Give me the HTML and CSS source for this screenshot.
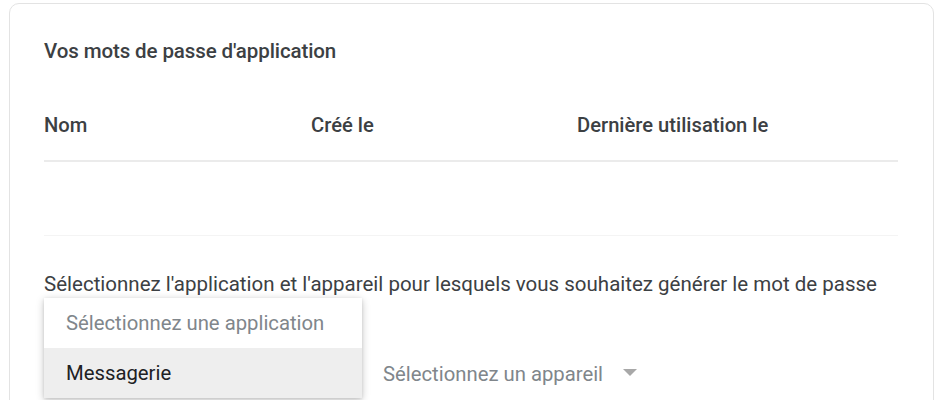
FILE: index.html
```html
<!DOCTYPE html>
<html>
<head>
    <meta charset="utf-8"/>
    <title>Mots de passe d'application</title>
    <link rel="stylesheet" href="styles.css">
</head>
<body>
<div class="card">
    <div class="title">Vos mots de passe d'application</div>
    <div class="table">
        <div class="row head">
            <span>Nom</span>
            <span>Créé le</span>
            <span>Dernière utilisation le</span>
        </div>
        <div class="row empty"></div>
    </div>
    <p class="hint">Sélectionnez l'application et l'appareil pour lesquels vous souhaitez générer le mot de passe</p>
    <div class="selects">
        <div class="select app">
            <ul class="menu">
                <li class="placeholder">Sélectionnez une application</li>
                <li class="active">Messagerie</li>
            </ul>
        </div>
        <div class="select device">
            <span>Sélectionnez un appareil</span>
            <i class="caret"></i>
        </div>
    </div>
</div>
</body>
</html>
```

FILE: styles.css
```css
* {
    margin:0;
    padding:0;
    list-style: none;
    box-sizing: border-box;
}
body {
    background: #fff;
    font-family: Roboto, "Liberation Sans", sans-serif;
    color: #3c4043;
    overflow: hidden;
}
.card {
    margin:3px 6px 0 9px;
    height:430px;
    border:1px solid #e3e3e3;
    border-radius: 10px;
    padding:35px 34px 0 34px;
}
.title {
    font-size:20.5px;
    font-weight:500;
    line-height:24px;
    letter-spacing:-0.1px;
}
.table {
    margin-top:38px;
    margin-right:1px;
}
.row {
    display:grid;
    grid-template-columns: 267px 266px 1fr;
}
.head {
    font-size:20.2px;
    font-weight:500;
    line-height:24px;
    padding:12px 0 23px;
    border-bottom:2px solid #ebebeb;
}
.empty {
    height:74px;
    border-bottom:1px solid #f4f4f4;
}
.hint {
    margin-top:36px;
    font-size:20.5px;
    line-height:24px;
    color:#3c4043;
}
.selects {
    display:flex;
    margin-top:53px;
    height:50px;
}
.select {
    position:relative;
    height:50px;
    line-height:50px;
    font-size:20.3px;
}
.app {
    width:318px;
    margin-right:21px;
}
.menu {
    position:absolute;
    top:-51px;
    left:0;
    width:318px;
    background:#fff;
    box-shadow: 0 2px 8px rgba(0,0,0,0.22), 0 1px 3px rgba(0,0,0,0.1);
    z-index:2;
}
.menu li {
    height:50px;
    line-height:50px;
    padding-left:22px;
}
.placeholder {
    color:#80868b;
}
.active {
    background:#eeeeee;
    color:#202124;
}
.device {
    display:flex;
    align-items:center;
    color:#80868b;
}
.caret {
    display:block;
    margin-left:20px;
    margin-top:-3px;
    width:0;
    height:0;
    border-left:7px solid transparent;
    border-right:7px solid transparent;
    border-top:7px solid #a8a8a8;
}
```
